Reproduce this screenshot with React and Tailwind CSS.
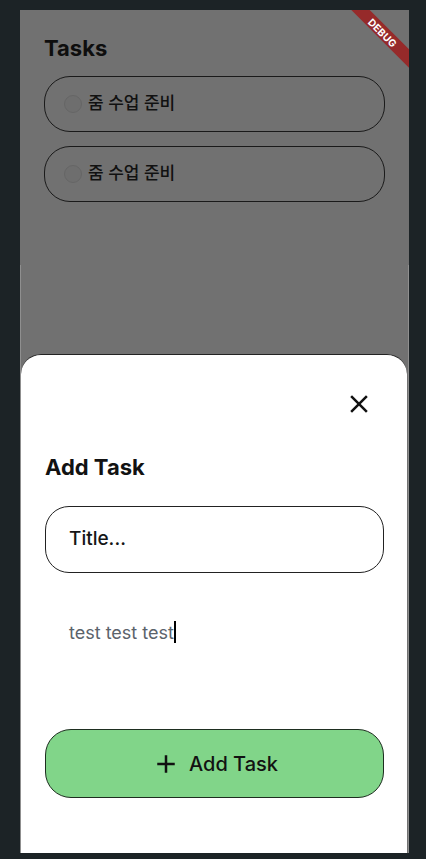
import React from "react";

const latin = { fontFamily: 'Inter, "Noto Sans CJK KR", sans-serif' };

function TaskCard() {
  return (
    <div className="flex items-center h-[56px] rounded-[26px] border border-[#1a1a1a] pl-[19px]">
      <div className="w-[18px] h-[18px] rounded-full bg-[#6e6e6e] border border-[#666666]" />
      <span
        className="ml-[6px] text-[17px] font-medium text-[#111111]"
        style={{ fontFamily: 'Inter, "Noto Sans CJK KR", sans-serif' }}
      >
        줌 수업 준비
      </span>
    </div>
  );
}

export default function App() {
  return (
    <div className="w-[426px] h-[859px] bg-[#1c2326] pt-[10px] pl-[20px]" style={latin}>
      <div className="relative w-[389px] h-[843px] bg-[#717171] overflow-hidden">
        <div className="px-[24px] pt-[24px]">
          <h1 className="text-[22px] leading-[28px] font-bold text-[#0e0e0e]">Tasks</h1>
          <div className="mt-[14px] flex flex-col gap-[14px]">
            <TaskCard />
            <TaskCard />
          </div>
        </div>

        {/* edge lines */}
        <div className="absolute left-0 top-[255px] bottom-0 w-px bg-[#8f8f8f]" />
        <div className="absolute right-0 top-[255px] bottom-0 w-px bg-[#8f8f8f]" />

        {/* bottom sheet */}
        <div className="absolute left-[1px] right-[2px] top-[344px] bottom-0 bg-white rounded-t-[20px] border-t border-[#222222] flex flex-col pl-[24px] pr-[23px]">
          <div className="flex justify-end pt-[25px] pr-[1px]">
            <button className="w-[48px] h-[48px] flex items-center justify-center">
              <svg width="30" height="30" viewBox="0 0 24 24" fill="#111111">
                <path d="M19 6.41L17.59 5 12 10.59 6.41 5 5 6.41 10.59 12 5 17.59 6.41 19 12 13.41 17.59 19 19 17.59 13.41 12z" />
              </svg>
            </button>
          </div>
          <h2 className="mt-[25px] text-[22px] leading-[28px] font-bold text-[#121212]">Add Task</h2>
          <div className="mt-[25px] h-[67px] rounded-[24px] border border-[#222222] flex items-center pl-[23px]">
            <span className="text-[19px] font-medium text-[#161616]">Title...</span>
          </div>
          <div className="mt-[47px] pl-[24px] flex items-center h-[24px]">
            <span className="text-[18px] text-[#5b636b]">test test test</span>
            <span className="w-[2px] h-[22px] bg-black" />
          </div>
          <button className="mt-[85px] h-[69px] rounded-[26px] bg-[#81d589] border border-[#1e2e20] flex items-center justify-center">
            <svg width="30" height="30" viewBox="0 0 24 24" fill="#111111">
              <path d="M19 13h-6v6h-2v-6H5v-2h6V5h2v6h6v2z" />
            </svg>
            <span className="ml-[8px] text-[20px] font-medium text-[#121212]">Add Task</span>
          </button>
        </div>

        {/* debug banner */}
        <div className="absolute top-0 right-0 w-[64px] h-[64px] overflow-hidden pointer-events-none">
          <div className="absolute left-[-22px] top-[16px] w-[120px] h-[13px] bg-[#962a2a] rotate-45 flex items-center justify-center">
            <span className="text-[10px] leading-none font-bold text-white tracking-[0.2px]">DEBUG</span>
          </div>
        </div>
      </div>
    </div>
  );
}
